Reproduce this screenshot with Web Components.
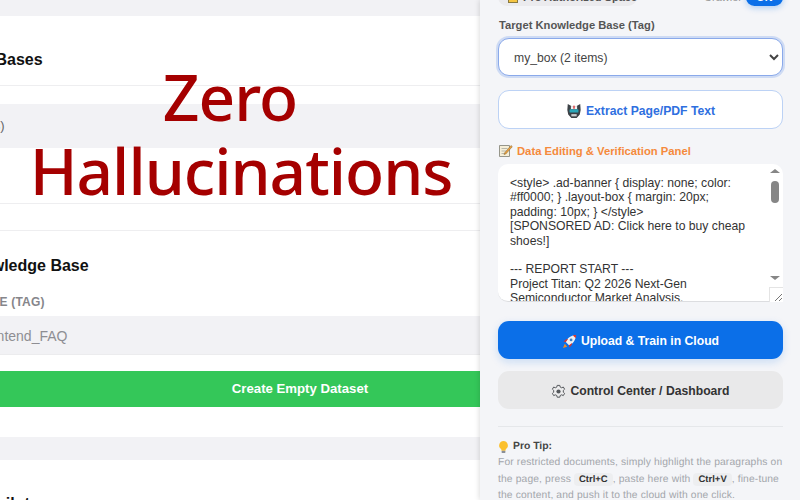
<!DOCTYPE html>
<html lang="en">
<head>
<meta charset="utf-8">
<title>Knowledge Base</title>
<style>
  html, body { margin: 0; height: 100%; overflow: hidden; }
  body { font-family: "Liberation Sans", Arial, sans-serif; }
</style>
</head>
<body>
<app-shell>
  <kb-main slot="main">
    <kb-card>
      <kb-title slot="title">Your Knowledge Bases</kb-title>
      <kb-row>my_box (2 items)</kb-row>
    </kb-card>
    <kb-card>
      <kb-title slot="title">Create New Knowledge Base</kb-title>
      <kb-field label="COLLECTION NAME (TAG)" placeholder="e.g. Project_Frontend_FAQ"></kb-field>
      <kb-submit>Create Empty Dataset</kb-submit>
    </kb-card>
    <kb-card>
      <kb-title slot="title">Your RAG Chat Copilot</kb-title>
    </kb-card>
  </kb-main>

  <side-panel slot="side">
    <side-head></side-head>
    <side-label>Target Knowledge Base (Tag)</side-label>
    <kb-select></kb-select>
    <side-button kind="outline">
      <svg slot="icon" width="16" height="16" viewBox="0 0 18 18"><path d="M2 1l4 2.500h6L16 1l.5 7-1 5-3.500 4H6l-3.500-4-1-5z" fill="#3c4146"/><rect x="5.500" y="3.500" width="7" height="3.500" fill="#f2f2f2"/><rect x="8.200" y="3" width="1.600" height="3.500" fill="#d9393c"/><rect x="4" y="7" width="10" height="3.800" rx=".8" fill="#2aa6b8"/><rect x="6" y="12.500" width="6" height="2.500" fill="#c9ccce"/></svg>
      Extract Page/PDF Text
    </side-button>
    <side-heading>
      <svg slot="icon" width="15" height="15" viewBox="0 0 15 15"><path d="M1.500 2.500h10v11h-10z" fill="#f6efd8" stroke="#8b8b80" stroke-width=".9"/><path d="M3.500 5.500h6M3.500 8h5M3.500 10.500h4" stroke="#a9a9a0" stroke-width=".8"/><path d="M6.500 10l6.500-7.500 1.300 1.200L7.800 11l-1.800.5z" fill="#f0a13a" stroke="#7a6238" stroke-width=".5"/></svg>
      Data Editing &amp; Verification Panel
    </side-heading>
    <data-editor>&lt;style&gt; .ad-banner { display: none; color: #ff0000; } .layout-box { margin: 20px; padding: 10px; } &lt;/style&gt;
[SPONSORED AD: Click here to buy cheap shoes!]

--- REPORT START ---
Project Titan: Q2 2026 Next-Gen Semiconductor Market Analysis.
Key findings follow below.</data-editor>
    <side-button kind="primary">
      <svg slot="icon" width="15" height="15" viewBox="0 0 16 16"><path d="M3 10.500L1 15l4.500-1.500z" fill="#f08a24"/><path d="M4 8.500C5.500 4.500 9 1.500 15 1c-.5 6-3.500 9.500-7.500 11z" fill="#eef1f5"/><path d="M11.500 1.400c1.200-.3 2.400-.4 3.500-.4 0 1.100-.1 2.300-.4 3.500z" fill="#d8352f"/><circle cx="9.700" cy="6.300" r="1.500" fill="#3f7fc4"/><path d="M4 8.500L1.500 8 4.500 5.500l2-.2zM7.500 12l.5 2.500 2.500-3 .2-2z" fill="#d8352f"/></svg>
      Upload &amp; Train in Cloud
    </side-button>
    <side-button kind="muted">
      <svg slot="icon" width="15" height="15" viewBox="0 0 15 15"><path d="M6.200 1h2.600l.4 1.700 1.500.7 1.600-.8 1.300 2.200-1.300 1.200v1.800l1.300 1.200-1.300 2.200-1.600-.8-1.500.7-.4 1.700H6.200l-.4-1.700-1.500-.7-1.600.8-1.300-2.200 1.300-1.200V6L1.400 4.800l1.300-2.200 1.600.8 1.500-.7z" transform="translate(0 .4)" fill="#ececed" stroke="#55585c" stroke-width="1"/><circle cx="7.500" cy="7.500" r="2.100" fill="#55585c"/></svg>
      Control Center / Dashboard
    </side-button>
    <pro-tip>
      <svg slot="icon" width="11" height="14" viewBox="0 0 12 14"><path d="M6 .5a4.800 4.800 0 0 0-3 8.500c.6.6.8 1.200.8 2h4.400c0-.8.2-1.400.8-2a4.800 4.800 0 0 0-3-8.500z" fill="#fbc02d"/><rect x="3.900" y="11" width="4.200" height="2.500" rx=".8" fill="#8a8f96"/></svg>
      For restricted documents, simply highlight the paragraphs on the page, press <key-cap>Ctrl+C</key-cap>, paste here with <key-cap>Ctrl+V</key-cap>, fine-tune the content, and push it to the cloud with one click.
    </pro-tip>
  </side-panel>

  <overlay-title slot="overlay"><span>Zero</span><br>Hallucinations</overlay-title>
</app-shell>

<script>
  class ShadowBox extends HTMLElement {
    constructor() {
      super();
      this.attachShadow({ mode: 'open' });
      this.shadowRoot.innerHTML = `<style>${this.constructor.css}</style>${this.markup()}`;
    }
    markup() {
      return '<slot></slot>';
    }
  }

  class AppShell extends ShadowBox {
    static css = `
      :host { display: flex; position: relative; width: 800px; height: 500px; overflow: hidden; background: #f4f5f8; }
      .main { flex: 0 0 480px; width: 480px; overflow: hidden; }
      .side { flex: 0 0 320px; width: 320px; box-shadow: -1px 0 5px rgba(0,0,0,.13); z-index: 1; }
      .overlay { position: absolute; left: 0; top: 0; width: 482px; z-index: 2; pointer-events: none; }
    `;
    markup() {
      return `<div class="main"><slot name="main"></slot></div>
        <div class="side"><slot name="side"></slot></div>
        <div class="overlay"><slot name="overlay"></slot></div>`;
    }
  }

  class KbMain extends ShadowBox {
    static css = `
      :host { display: flex; flex-direction: column; gap: 23px; width: 948px; margin-left: -174px; padding-top: 16px; background: #f2f2f5; }
    `;
  }

  class KbCard extends ShadowBox {
    static css = `
      :host { display: block; background: #fff; padding: 0 40px; }
      .head { padding: 35px 0 16px; border-bottom: 1px solid #eeeef0; margin-bottom: 18px; }
      :host(:nth-of-type(1)) .body { padding-bottom: 55px; border-bottom: 1px solid #eeeef0; }
      :host(:nth-of-type(1)) { padding-bottom: 26px; border-bottom: 1px solid #eeeef0; margin-bottom: -23px; }
      :host(:nth-of-type(2)) .head { border: 0; margin: 0; padding: 26px 0 20px; }
      :host(:nth-of-type(2)) .body { padding-bottom: 30px; }
      :host(:nth-of-type(2)) ::slotted(kb-title) { padding-left: 3px; }
      :host(:nth-of-type(3)) .head { border: 0; padding-top: 35px; }
      :host(:nth-of-type(3)) ::slotted(kb-title) { margin-left: -11px; }
    `;
    markup() {
      return '<div class="head"><slot name="title"></slot></div><div class="body"><slot></slot></div>';
    }
  }

  class KbTitle extends ShadowBox {
    static css = `:host { display: block; font-size: 16px; line-height: 18px; font-weight: 700; color: #111; }`;
  }

  class KbRow extends ShadowBox {
    static css = `
      :host { display: block; background: #f2f2f5; height: 44px; line-height: 44px; padding-left: 39px; font-size: 13px; color: #666; }
    `;
  }

  class KbField extends ShadowBox {
    static css = `
      :host { display: block; }
      .label { font-size: 12px; line-height: 14px; font-weight: 700; color: #86868b; letter-spacing: .2px; margin-bottom: 7px; padding-left: 22px; }
      .input { background: #f2f2f5; height: 38px; line-height: 40px; padding-left: 31px; font-size: 14px; color: #8e8e93; border-bottom: 1px solid #ececee; }
    `;
    markup() {
      return `<div class="label">${this.getAttribute('label')}</div>
        <div class="input">${this.getAttribute('placeholder')}</div>`;
    }
  }

  class KbSubmit extends ShadowBox {
    static css = `
      :host { display: block; margin-top: 16px; background: #34c759; color: #fff; height: 36px; line-height: 36px; text-align: center; font-size: 13.200px; font-weight: 700; }
    `;
  }

  class SidePanel extends ShadowBox {
    static css = `
      :host { display: block; box-sizing: border-box; height: 500px; padding: 0 17px 0 18px; background: #f4f5f8; overflow: hidden; }
    `;
  }

  class SideHead extends ShadowBox {
    static css = `
      :host { display: flex; align-items: center; justify-content: space-between; height: 18px; margin-top: -12px; font-size: 11px; }
      .pill { display: flex; align-items: center; gap: 5px; box-sizing: border-box; background: #ebebee; border-radius: 9px; padding-left: 10px; height: 18px; width: 139px; font-weight: 700; color: #555; white-space: nowrap; }
      .right { display: flex; align-items: center; gap: 4px; color: #999; }
      .on { display: block; background: #0b6fe8; color: #fff; font-weight: 700; width: 37px; height: 17px; line-height: 17px; text-align: center; border-radius: 9px; box-shadow: 0 2px 6px rgba(11,111,232,.3); }
      .box { width: 10px; height: 10px; background: #f5c542; border: 1px solid #8a7a40; }
    `;
    markup() {
      return `<div class="pill"><span class="box"></span>Pro Authorized Space</div>
        <div class="right"><span>Crawler</span><span class="on">ON</span></div>`;
    }
  }

  class SideLabel extends ShadowBox {
    static css = `
      :host { display: block; margin-top: 12px; font-size: 11.200px; line-height: 14px; font-weight: 700; color: #555; padding-left: 1px; }
    `;
  }

  class KbSelect extends ShadowBox {
    static css = `
      :host { display: block; margin-top: 6px; }
      select { display: block; width: 100%; box-sizing: border-box; height: 38px; border: 1px solid #8aa9ea; border-radius: 11px; background-color: #fff; padding: 2px 11px 0; font: 12.200px "Liberation Sans", Arial, sans-serif; color: #444; box-shadow: 0 0 0 2px rgba(120,160,235,.3); outline: 0; }
    `;
    markup() {
      return '<select><option>my_box (2 items)</option></select>';
    }
  }

  class SideButton extends ShadowBox {
    static css = `
      :host { display: flex; align-items: center; justify-content: center; gap: 4px; box-sizing: border-box; height: 39px; padding-top: 2px; border-radius: 11px; font-size: 12.200px; font-weight: 700; }
      :host([kind="outline"]) { margin-top: 14px; background: #fff; border: 1px solid #bcd2f5; color: #2f6fe0; }
      :host([kind="primary"]) { margin-top: 19px; height: 38px; background: #0b6fe8; color: #fff; box-shadow: 0 3px 9px rgba(11,111,232,.18); }
      :host([kind="muted"]) { margin-top: 12px; height: 38px; background: #e9e9ea; color: #333; }
      .text { white-space: nowrap; }
      ::slotted(svg) { flex: none; }
    `;
    markup() {
      return '<slot name="icon"></slot><span class="text"><slot></slot></span>';
    }
  }

  class SideHeading extends ShadowBox {
    static css = `
      :host { display: flex; align-items: center; gap: 4px; margin-top: 14px; height: 15px; font-size: 11.250px; font-weight: 700; color: #f58a3c; }
    `;
    markup() {
      return '<slot name="icon"></slot><span><slot></slot></span>';
    }
  }

  class DataEditor extends ShadowBox {
    static css = `
      :host { display: block; position: relative; margin-top: 6px; }
      .area { box-sizing: border-box; height: 138px; padding: 12px 28px 0 12px; background: #fff; border-radius: 10px; border-bottom: 1px solid #dcdde0; font-size: 12.200px; line-height: 14.400px; color: #333; white-space: pre-wrap; overflow: hidden; }
      .up, .down { position: absolute; right: 3px; width: 0; height: 0; border-left: 5px solid transparent; border-right: 5px solid transparent; }
      .up { top: 5px; border-bottom: 4px solid #868686; }
      .down { top: 112px; border-top: 4px solid #868686; }
      .thumb { position: absolute; right: 4px; top: 17px; width: 8px; height: 22px; border-radius: 4px; background: #868686; }
      .grip { position: absolute; right: 0; bottom: 0; width: 14px; height: 15px; box-sizing: border-box; border-left: 1px solid #e4e4e4; border-top: 1px solid #e4e4e4; background: #fff; }
      .grip svg { display: block; }
    `;
    markup() {
      return `<div class="area"><slot></slot></div>
        <span class="up"></span><span class="thumb"></span><span class="down"></span>
        <span class="grip"><svg width="13" height="14" viewBox="0 0 13 14"><path d="M5 13l7-7M9 13l3-3" stroke="#777" stroke-width="1" fill="none"/></svg></span>`;
    }
  }

  class ProTip extends ShadowBox {
    static css = `
      :host { display: block; margin-top: 17px; padding-top: 12px; border-top: 1px solid #e5e7ea; font-size: 10.300px; line-height: 16.500px; letter-spacing: .13px; color: #a3a6ab; text-rendering: geometricPrecision; }
      .head { display: flex; align-items: center; gap: 4px; font-weight: 700; font-size: 10.400px; letter-spacing: 0; color: #444; height: 16px; }
    `;
    markup() {
      return '<div class="head"><slot name="icon"></slot>Pro Tip:</div><slot></slot>';
    }
  }

  class KeyCap extends ShadowBox {
    static css = `
      :host { display: inline-block; background: #edeef0; border-radius: 4px; padding: 0 5px; margin: 0; color: #333; font-size: 9.500px; font-weight: 700; letter-spacing: 0; line-height: 13px; }
    `;
  }

  class OverlayTitle extends ShadowBox {
    static css = `
      :host { display: block; padding-top: 60px; text-align: center; font-family: "Noto Sans", sans-serif; font-size: 64px; font-weight: 500; line-height: 74px; letter-spacing: -1px; color: #a50000; }
      ::slotted(span) { padding-right: 22px; }
    `;
  }

  customElements.define('app-shell', AppShell);
  customElements.define('kb-main', KbMain);
  customElements.define('kb-card', KbCard);
  customElements.define('kb-title', KbTitle);
  customElements.define('kb-row', KbRow);
  customElements.define('kb-field', KbField);
  customElements.define('kb-submit', KbSubmit);
  customElements.define('side-panel', SidePanel);
  customElements.define('side-head', SideHead);
  customElements.define('side-label', SideLabel);
  customElements.define('kb-select', KbSelect);
  customElements.define('side-button', SideButton);
  customElements.define('side-heading', SideHeading);
  customElements.define('data-editor', DataEditor);
  customElements.define('pro-tip', ProTip);
  customElements.define('key-cap', KeyCap);
  customElements.define('overlay-title', OverlayTitle);
</script>
</body>
</html>
